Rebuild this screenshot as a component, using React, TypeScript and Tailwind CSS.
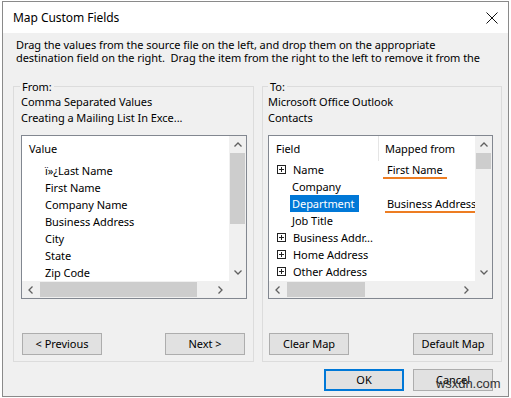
import React from "react";

const font = { fontFamily: '"Noto Sans", "Segoe UI", sans-serif', letterSpacing: "-0.05px" };

function ChevUp() {
  return (
    <svg width="8" height="5" viewBox="0 0 8 5" className="block">
      <path d="M0.5 4.5 L4 1 L7.5 4.5" fill="none" stroke="#606060" strokeWidth="1.3" />
    </svg>
  );
}
function ChevDown() {
  return (
    <svg width="8" height="5" viewBox="0 0 8 5" className="block">
      <path d="M0.5 0.5 L4 4 L7.5 0.5" fill="none" stroke="#606060" strokeWidth="1.3" />
    </svg>
  );
}
function ChevLeft() {
  return (
    <svg width="5" height="8" viewBox="0 0 5 8" className="block">
      <path d="M4.5 0.5 L1 4 L4.5 7.5" fill="none" stroke="#606060" strokeWidth="1.3" />
    </svg>
  );
}
function ChevRight() {
  return (
    <svg width="5" height="8" viewBox="0 0 5 8" className="block">
      <path d="M0.5 0.5 L4 4 L0.5 7.5" fill="none" stroke="#606060" strokeWidth="1.3" />
    </svg>
  );
}

function PlusBox() {
  return (
    <svg width="9" height="9" viewBox="0 0 9 9" className="block shrink-0">
      <rect x="0.5" y="0.5" width="8" height="8" fill="white" stroke="#222" strokeWidth="1" />
      <path d="M2 4.5 H7 M4.5 2 V7" stroke="#222" strokeWidth="1" />
    </svg>
  );
}

function VScroll({ thumbH }: { thumbH: number }) {
  return (
    <div className="w-[17px] h-full bg-[#f0f0f0] flex flex-col">
      <div className="h-[17px] flex items-center justify-center">
        <ChevUp />
      </div>
      <div className="flex-1 flex flex-col">
        <div className="mx-[1px] bg-[#cdcdcd]" style={{ height: thumbH }} />
      </div>
      <div className="h-[17px] flex items-center justify-center">
        <ChevDown />
      </div>
    </div>
  );
}

function HScroll({ offset, thumbW }: { offset: number; thumbW: number }) {
  return (
    <div className="h-[17px] flex bg-[#f0f0f0]">
      <div className="flex-1 flex items-center">
        <div className="w-[17px] h-full flex items-center justify-center shrink-0">
          <ChevLeft />
        </div>
        <div className="flex-1 h-full flex">
          <div className="my-[1px] bg-[#cdcdcd]" style={{ marginLeft: offset, width: thumbW }} />
        </div>
        <div className="w-[17px] h-full flex items-center justify-center shrink-0">
          <ChevRight />
        </div>
      </div>
      <div className="w-[17px] h-full bg-[#f0f0f0]" />
    </div>
  );
}

function Btn({ children, ok }: { children: React.ReactNode; ok?: boolean }) {
  return (
    <div
      className={
        "w-[80px] h-[22px] flex items-center justify-center bg-[#e1e1e1] text-[11px] text-black " +
        (ok ? "border-2 border-[#0078d7]" : "border border-[#adadad]")
      }
    >
      {children}
    </div>
  );
}

export default function App() {
  const leftRows = ["ï»¿Last Name", "First Name", "Company Name", "Business Address", "City", "State", "Zip Code"];
  return (
    <div className="w-[511px] h-[398px] bg-white overflow-hidden relative text-black" style={font}>
      <div className="ml-[2px] mt-[1px] w-[507px] h-[396px] border border-[#8a8a8a] flex flex-col">
        {/* Title bar */}
        <div className="h-[31px] bg-white flex items-center justify-between shrink-0">
          <span className="pl-[10px] text-[12px] leading-none">Map Custom Fields</span>
          <svg width="12" height="12" viewBox="0 0 12 12" className="mr-[10px]">
            <path d="M0.5 0.5 L11.5 11.5 M11.5 0.5 L0.5 11.5" stroke="#111" strokeWidth="1" />
          </svg>
        </div>
        {/* Body */}
        <div className="flex-1 bg-[#f0f0f0] flex flex-col">
          <div className="h-[53px] pt-[5px] pl-[13px] text-[11px] leading-[13px] shrink-0 whitespace-nowrap overflow-hidden">
            <div>Drag the values from the source file on the left, and drop them on the appropriate</div>
            <div>destination field on the right.&nbsp; Drag the item from the right to the left to remove it from the</div>
          </div>
          <div className="flex ml-[10px] gap-[8px]">
            {/* From group */}
            <div className="w-[241px] h-[276px] border border-[#dcdcdc] relative flex flex-col">
              <span className="absolute -top-[7px] left-[6px] px-[2px] bg-[#f0f0f0] text-[11px] leading-[13px]">From:</span>
              <div className="pt-[7px] pl-[7px] text-[11px] leading-[16px]">
                <div>Comma Separated Values</div>
                <div>Creating a Mailing List In Exce...</div>
              </div>
              <div className="ml-[7px] mt-[9px] w-[226px] h-[164px] border border-[#828790] bg-white flex flex-col">
                <div className="flex h-[145px]">
                  <div className="flex-1 text-[11px] leading-[17px] pt-[4px]">
                    <div className="pl-[7px] h-[17px]">Value</div>
                    <div className="h-[5px]" />
                    {leftRows.map((r) => (
                      <div key={r} className="pl-[23px] h-[17px] whitespace-nowrap">
                        {r}
                      </div>
                    ))}
                  </div>
                  <VScroll thumbH={71} />
                </div>
                <HScroll offset={1} thumbW={157} />
              </div>
              <div className="mt-auto mb-[6px] px-[8px] flex justify-between">
                <Btn>&lt; Previous</Btn>
                <Btn>Next &gt;</Btn>
              </div>
            </div>
            {/* To group */}
            <div className="w-[240px] h-[276px] border border-[#dcdcdc] relative flex flex-col">
              <span className="absolute -top-[7px] left-[5px] px-[2px] bg-[#f0f0f0] text-[11px] leading-[13px]">To:</span>
              <div className="pt-[7px] pl-[5px] text-[11px] leading-[16px]">
                <div>Microsoft Office Outlook</div>
                <div>Contacts</div>
              </div>
              <div className="ml-[5px] mt-[9px] w-[225px] h-[164px] border border-[#828790] bg-white flex flex-col">
                <div className="flex h-[145px]">
                  <div className="flex-1 text-[11px] leading-[17px] overflow-hidden">
                    <div className="flex h-[25px]">
                      <div className="w-[110px] pl-[7px] pt-[4px] border-r border-[#e5e5e5]">Field</div>
                      <div className="pl-[6px] pt-[4px] whitespace-nowrap">Mapped from</div>
                    </div>
                    <div className="flex">
                      <div className="w-[111px] shrink-0">
                        <div className="h-[17px] pl-[8px] flex items-center gap-[7px]">
                          <PlusBox />
                          <span>Name</span>
                        </div>
                        <div className="h-[17px] pl-[23px]">Company</div>
                        <div className="h-[17px] pl-[21px] flex">
                          <span className="bg-[#0078d7] text-white px-[2px] w-[69px]">Department</span>
                        </div>
                        <div className="h-[17px] pl-[23px]">Job Title</div>
                        <div className="h-[17px] pl-[8px] flex items-center gap-[7px] whitespace-nowrap">
                          <PlusBox />
                          <span>Business Addr...</span>
                        </div>
                        <div className="h-[17px] pl-[8px] flex items-center gap-[7px] whitespace-nowrap">
                          <PlusBox />
                          <span>Home Address</span>
                        </div>
                        <div className="h-[17px] pl-[8px] flex items-center gap-[7px] whitespace-nowrap">
                          <PlusBox />
                          <span>Other Address</span>
                        </div>
                      </div>
                      <div className="flex-1 whitespace-nowrap">
                        <div className="h-[17px] pl-[3px]">
                          <span className="inline-block h-[18px] px-[4px] border-b-2 border-[#ed7d22] leading-[17px]">First Name</span>
                        </div>
                        <div className="h-[17px]" />
                        <div className="h-[17px] pl-[5px]">
                          <span className="inline-block h-[18px] px-[2px] border-b-2 border-[#ed7d22] leading-[17px]">Business Address</span>
                        </div>
                      </div>
                    </div>
                  </div>
                  <VScroll thumbH={16} />
                </div>
                <HScroll offset={1} thumbW={78} />
              </div>
              <div className="mt-auto mb-[6px] ml-[6px] mr-[8px] flex justify-between">
                <Btn>Clear Map</Btn>
                <Btn>Default Map</Btn>
              </div>
            </div>
          </div>
          <div className="flex justify-end gap-[9px] mt-[7px] mr-[15px]">
            <Btn ok>OK</Btn>
            <Btn>Cancel</Btn>
          </div>
        </div>
      </div>
      <span className="absolute left-[436px] top-[376px] text-[13px] text-[#333] leading-[16px]" style={{ fontFamily: '"Liberation Sans", sans-serif' }}>
        wsxdn.com
      </span>
    </div>
  );
}
